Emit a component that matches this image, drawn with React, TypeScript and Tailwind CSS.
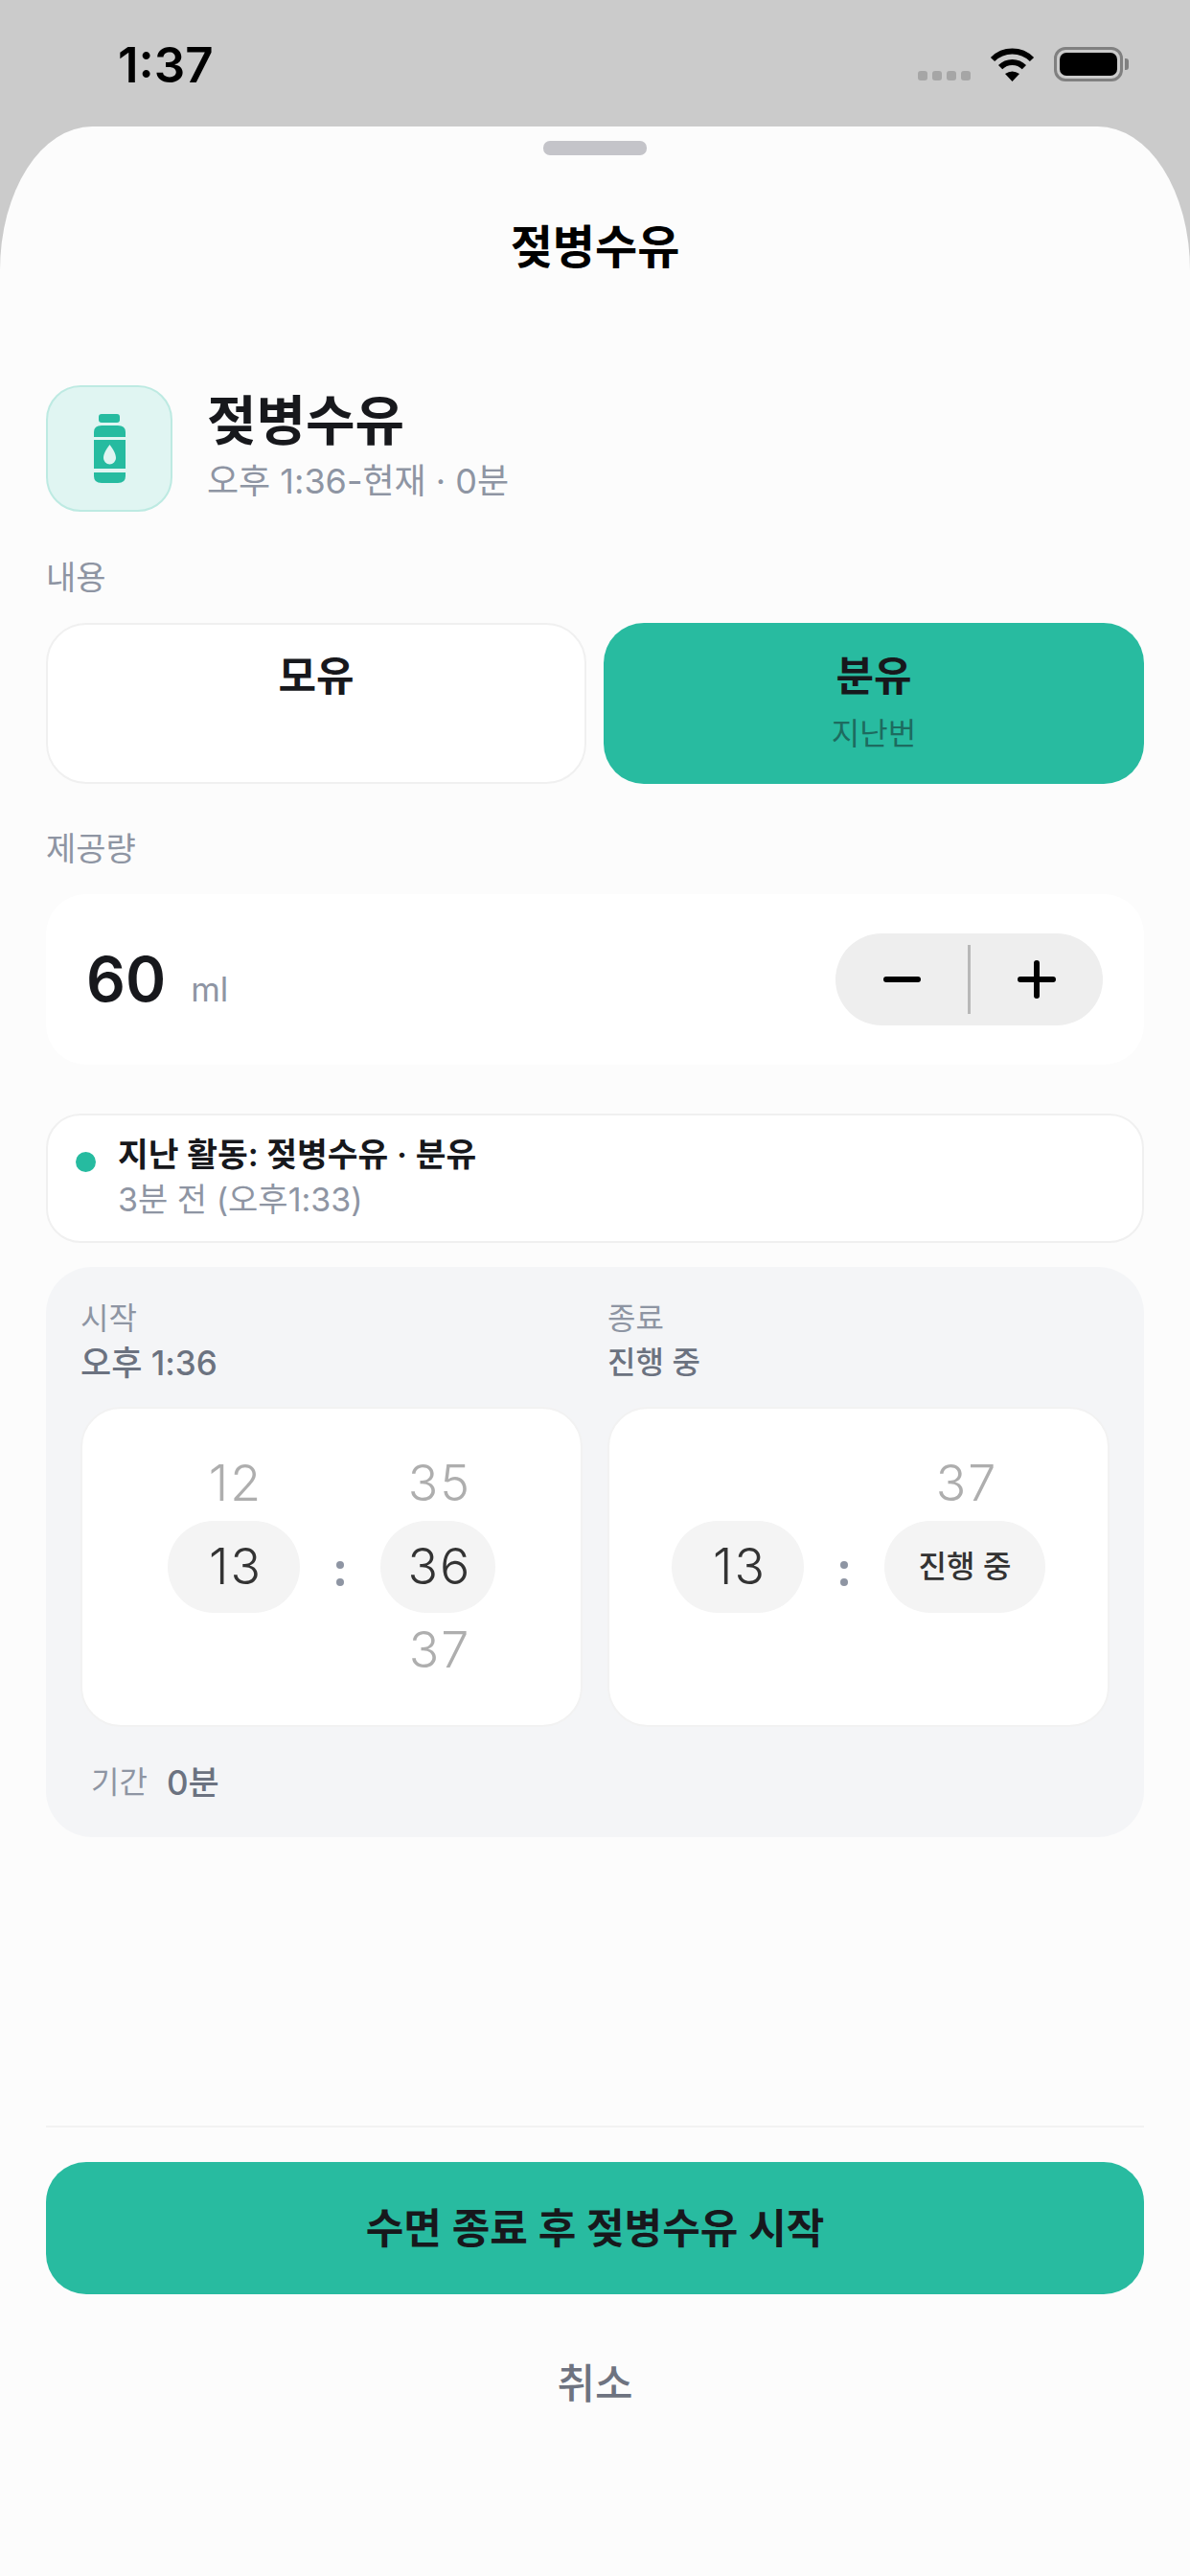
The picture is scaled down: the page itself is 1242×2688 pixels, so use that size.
import React from 'react';

const fontStack = 'font-[Inter,"Noto_Sans_CJK_KR",sans-serif]';

function WifiIcon() {
  return (
    <svg width="47" height="36" viewBox="0 0 47 36" fill="none">
      <path d="M3 13 A29 29 0 0 1 44 13" stroke="#000" strokeWidth="6" />
      <path d="M11.1 21.1 A17.5 17.5 0 0 1 35.9 21.1" stroke="#000" strokeWidth="6" />
      <path d="M23.5 36 L16 28 Q23.5 23 31 28 Z" fill="#000" />
    </svg>
  );
}

function BatteryIcon() {
  return (
    <div className="flex items-center">
      <div className="w-[72px] h-[36px] rounded-[12px] border-[3px] border-[#808080] p-[3px]">
        <div className="w-full h-full rounded-[7px] bg-black" />
      </div>
      <div className="w-[4px] h-[12px] ml-[2px] rounded-r-[3px] bg-[#808080]" />
    </div>
  );
}

function BottleIcon() {
  return (
    <svg width="33" height="72" viewBox="0 0 33 72" fill="#26bba0">
      <rect x="5" y="0" width="22" height="9" rx="3" />
      <path d="M0 24 V19 Q0 12 8 12 H25 Q33 12 33 19 V24 Z" />
      <rect x="0" y="27" width="33" height="30" />
      <path d="M16.5 32 C13 37 10 41 10 46 A6.5 6.5 0 0 0 23 46 C23 41 20 37 16.5 32 Z" fill="#e0f5f2" />
      <path d="M0 61 H33 V65 Q33 72 25 72 H8 Q0 72 0 65 Z" />
    </svg>
  );
}

function PickerColumn({ above, value, below, width, small }: { above?: string; value: string; below?: string; width: string; small?: boolean }) {
  return (
    <div className="flex flex-col items-center">
      <div className="h-[78px] pl-[4px] flex items-center text-[52px] font-light tracking-[2px] text-[#aeaeae]">{above}</div>
      <div className={`${width} h-[96px] rounded-[48px] bg-[#f4f4f4] flex items-center justify-center text-[#333333] ${small ? 'text-[32px] font-medium' : 'pl-[4px] text-[52px] font-light tracking-[2px]'}`}>
        {value}
      </div>
      <div className="h-[78px] pl-[4px] flex items-center text-[52px] font-light tracking-[2px] text-[#aeaeae]">{below}</div>
    </div>
  );
}

function PickerColon() {
  return (
    <div className="w-[8px] flex flex-col gap-[10px] mt-[14px]">
      <div className="w-[8px] h-[8px] rounded-full bg-[#8e95a3]" />
      <div className="w-[8px] h-[8px] rounded-full bg-[#8e95a3]" />
    </div>
  );
}

export default function App() {
  return (
    <div className={`w-[1242px] h-[2688px] overflow-hidden bg-[#cbcbcb] flex flex-col ${fontStack}`}>
      {/* status bar */}
      <div className="h-[132px] shrink-0 pl-[123px] pr-[64px] pt-[43px] flex justify-between items-start">
        <span className="text-[51px] leading-[50px] font-semibold text-black">1:37</span>
        <div className="flex items-end gap-[20px] pt-[6px]">
          <div className="flex gap-[5px] pb-[1px]">
            <div className="w-[10px] h-[10px] rounded-[3px] bg-[#a6a6a6]" />
            <div className="w-[10px] h-[10px] rounded-[3px] bg-[#a6a6a6]" />
            <div className="w-[10px] h-[10px] rounded-[3px] bg-[#a6a6a6]" />
            <div className="w-[10px] h-[10px] rounded-[3px] bg-[#a6a6a6]" />
          </div>
          <WifiIcon />
          <BatteryIcon />
        </div>
      </div>

      {/* sheet */}
      <div className="flex-1 flex flex-col bg-[#fcfcfc] rounded-t-[96px_150px] px-[48px] pt-[15px]">
        <div className="w-[108px] h-[15px] mx-auto rounded-[7px] bg-[#c4c4c9]" />
        <div className="mt-[66px] h-[60px] leading-[60px] text-center text-[48px] font-semibold text-black">젖병수유</div>

        <div className="mt-[114px] flex gap-[36px]">
          <div className="w-[132px] h-[132px] rounded-[36px] border-2 border-[#bdeae2] bg-[#e0f5f2] flex items-center justify-center">
            <BottleIcon />
          </div>
          <div className="pt-[4px]">
            <div className="h-[66px] leading-[66px] text-[56px] font-semibold text-[#17181c]">젖병수유</div>
            <div className="mt-[8px] h-[44px] leading-[44px] text-[36px] text-[#8e95a3]">오후 1:36-현재 · 0분</div>
          </div>
        </div>

        <div className="mt-[47px] h-[44px] leading-[44px] text-[34px] text-[#8e95a3]">내용</div>
        <div className="mt-[25px] grid grid-cols-2 gap-[18px]">
          <div className="h-[168px] rounded-[42px] border-2 border-[#f0f0f0] bg-white pt-[24px] text-center">
            <div className="h-[58px] leading-[58px] text-[43px] font-semibold text-[#17181c]">모유</div>
          </div>
          <div className="h-[168px] rounded-[42px] bg-[#28bba0] pt-[26px] text-center">
            <div className="h-[58px] leading-[58px] text-[43px] font-semibold text-[#17181c]">분유</div>
            <div className="mt-[10px] h-[44px] leading-[44px] text-[32px] text-[#1d6b5f]">지난번</div>
          </div>
        </div>

        <div className="mt-[46px] h-[44px] leading-[44px] text-[34px] text-[#8e95a3]">제공량</div>
        <div className="mt-[25px] h-[178px] rounded-[42px] bg-white pl-[42px] pr-[43px] flex items-center justify-between">
          <div className="flex items-baseline">
            <span className="text-[64px] font-semibold text-[#17181c]">60</span>
            <span className="ml-[26px] text-[35px] text-[#8e95a3]">ml</span>
          </div>
          <div className="w-[279px] h-[96px] rounded-[48px] bg-[#eeeeee] flex items-center">
            <div className="flex-1 flex justify-center">
              <div className="w-[39px] h-[6px] rounded-[3px] bg-black" />
            </div>
            <div className="w-[3px] h-[72px] bg-[#b8b8b8]" />
            <div className="flex-1 flex justify-center">
              <svg width="40" height="40" viewBox="0 0 40 40" stroke="#000" strokeWidth="6" strokeLinecap="round">
                <path d="M3 20 H37 M20 3 V37" />
              </svg>
            </div>
          </div>
        </div>

        <div className="mt-[51px] h-[135px] rounded-[36px] border-2 border-[#f0f0f0] bg-white pl-[29px] flex items-center gap-[23px]">
          <div className="w-[21px] h-[21px] rounded-full bg-[#26bba0] -mt-[34px]" />
          <div className="-mt-[5px]">
            <div className="h-[50px] leading-[50px] text-[34.5px] font-semibold text-[#17181c]">지난 활동: 젖병수유 · 분유</div>
            <div className="h-[44px] leading-[44px] text-[34px] text-[#8e95a3]">3분 전 (오후1:33)</div>
          </div>
        </div>

        <div className="mt-[25px] rounded-[48px] bg-[#f4f5f7] px-[36px] pt-[32px] pb-[35px]">
          <div className="grid grid-cols-2 gap-[26px]">
            <div>
              <div className="h-[44px] leading-[44px] text-[32px] text-[#8e95a3]">시작</div>
              <div className="mt-[2px] h-[44px] leading-[44px] text-[35px] font-medium text-[#6b7280]">오후 1:36</div>
              <div className="mt-[24px] h-[334px] rounded-[42px] border-2 border-[#f2f2f2] bg-white flex items-center justify-center gap-[38px]">
                <PickerColumn above="12" value="13" width="w-[138px]" />
                <PickerColon />
                <PickerColumn above="35" value="36" below="37" width="w-[120px]" />
              </div>
            </div>
            <div>
              <div className="h-[44px] leading-[44px] text-[32px] text-[#8e95a3]">종료</div>
              <div className="mt-[2px] h-[44px] leading-[44px] text-[32px] font-medium text-[#6b7280]">진행 중</div>
              <div className="mt-[24px] h-[334px] rounded-[42px] border-2 border-[#f2f2f2] bg-white flex items-center justify-center gap-[38px]">
                <PickerColumn value="13" width="w-[138px]" />
                <PickerColon />
                <PickerColumn above="37" value="진행 중" width="w-[168px]" small />
              </div>
            </div>
          </div>
          <div className="mt-[36px] pl-[11px] h-[44px] flex items-center gap-[20px]">
            <span className="text-[32px] text-[#8e95a3]">기간</span>
            <span className="text-[35px] font-medium text-[#6b7280]">0분</span>
          </div>
        </div>

        <div className="mt-auto pb-[171px]">
          <div className="h-[2px] bg-[#f2f2f2]" />
          <div className="mt-[36px] h-[138px] rounded-[42px] bg-[#28bba0] flex items-center justify-center text-[43px] font-semibold text-[#17181c]">
            수면 종료 후 젖병수유 시작
          </div>
          <div className="mt-[63px] h-[60px] leading-[60px] text-center text-[43px] font-medium text-[#6e7380]">취소</div>
        </div>
      </div>
    </div>
  );
}
